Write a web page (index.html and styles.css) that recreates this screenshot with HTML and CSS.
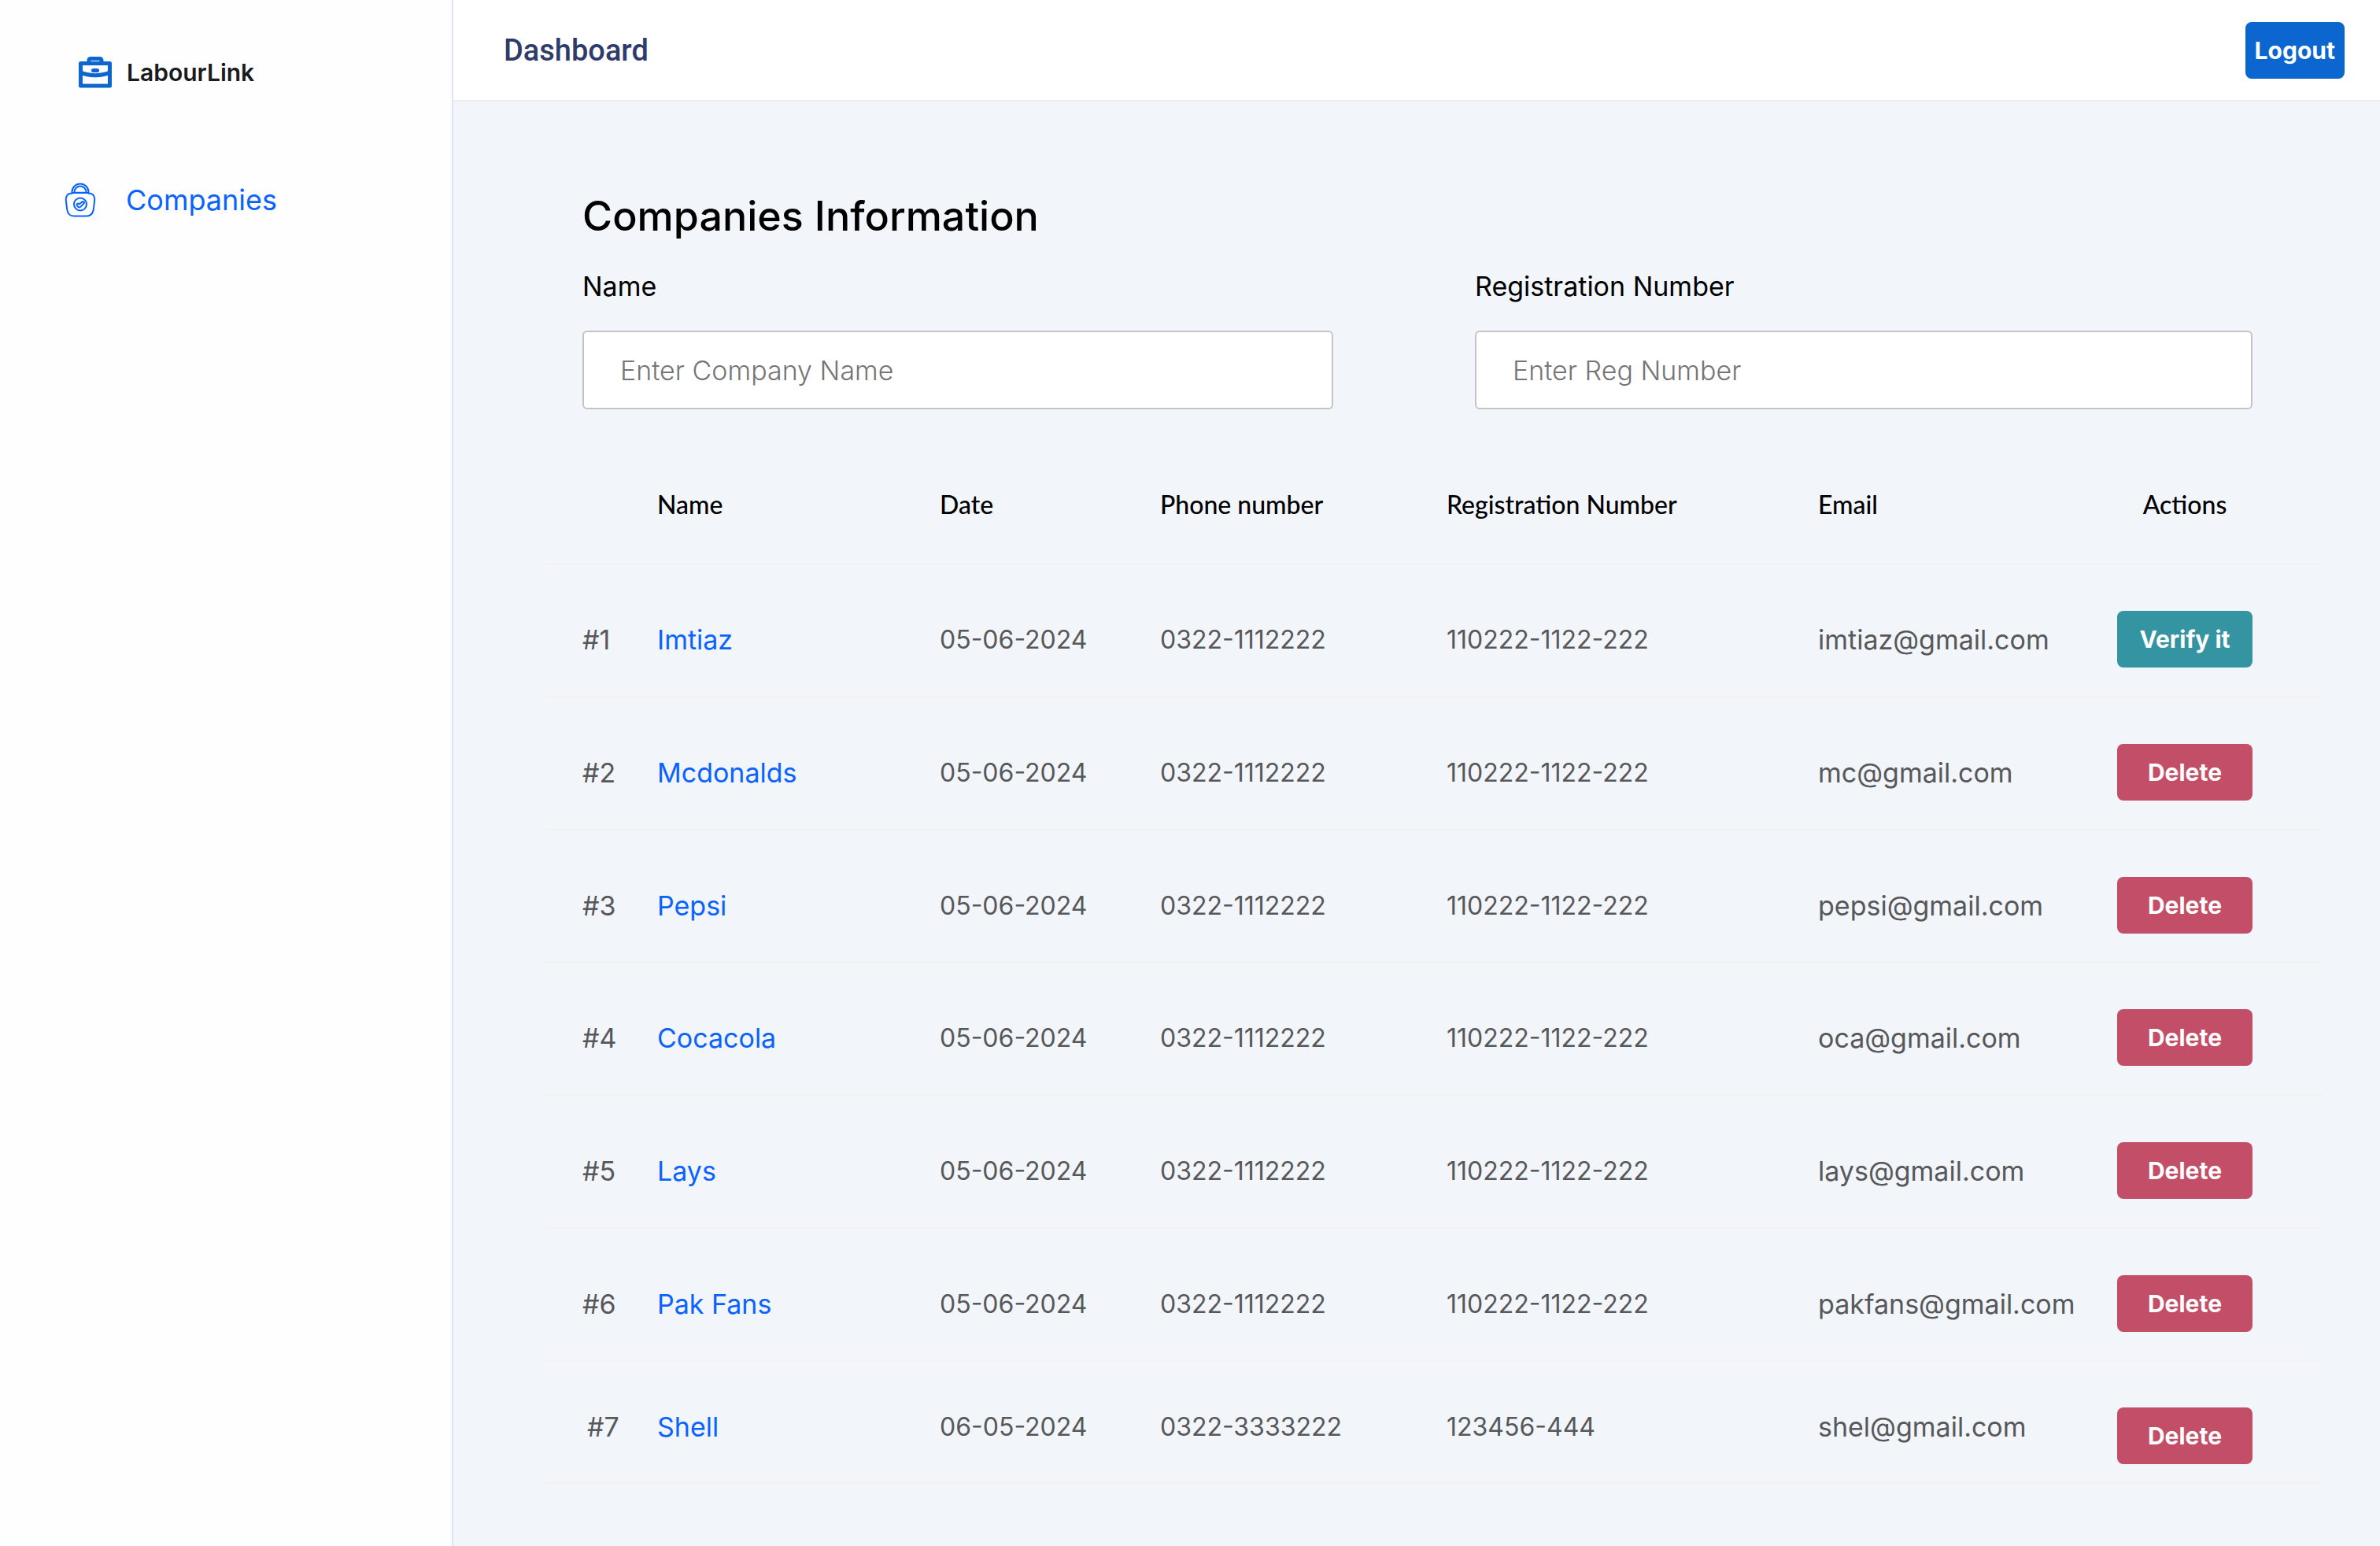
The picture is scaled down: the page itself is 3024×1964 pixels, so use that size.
FILE: index.html
```html
<!DOCTYPE html>
<html lang="en">
<head>
<meta charset="utf-8">
<title>LabourLink – Dashboard</title>
<meta name="viewport" content="width=device-width, initial-scale=1">
<link rel="stylesheet" href="styles.css">
</head>
<body>
<div class="app">
  <aside class="sidebar">
    <a class="brand" href="#">
      <svg class="brand-icon" viewBox="0 0 44 42" aria-hidden="true">
        <path fill="none" stroke="#0b66cf" stroke-width="5" stroke-linejoin="round" d="M3.500 9.500h37v28.500h-37zM14 9V5.500a2 2 0 0 1 2-2h12a2 2 0 0 1 2 2V9M3 20.500c9 5.500 29 5.500 38 0"/>
        <rect x="17" y="16" width="10" height="5" rx="2.500" fill="#0b66cf"/>
      </svg>
      <span>LabourLink</span>
    </a>
    <nav>
      <a class="nav-link" href="#">
        <svg class="nav-icon" viewBox="0 0 40 44" fill="none" stroke="#0a63ff" stroke-width="2" stroke-linecap="round" stroke-linejoin="round" aria-hidden="true">
          <path d="M9.500 13.500C4 13.500 1.500 17 1.800 22.500l1.400 11.500c.8 6 3.500 8.500 9 8.500h15.600c5.500 0 8.200-2.500 9-8.500l1.400-11.500c.3-5.500-2.200-9-7.700-9"/>
          <path d="M9.500 13.500V12a10.500 10.500 0 0 1 21 0v1.500M12.500 12.800V12a7.500 7.500 0 0 1 15 0v.8zM9.500 13h21"/>
          <circle cx="20" cy="27.500" r="8"/>
          <path d="M15.500 28c0-1.500 2-2 3-.5 1.500-1 3-3 5-3.500 1.500 0 2 1.500 1 2.500-1.500 1.500-3.500 4.500-5.500 5-1.500 0-3.500-2-3.500-3.500z"/>
        </svg>
        <span>Companies</span>
      </a>
    </nav>
  </aside>

  <div class="main">
    <header class="topbar">
      <h1 class="topbar-title">Dashboard</h1>
      <button class="btn btn-primary" type="button">Logout</button>
    </header>

    <main class="content">
      <h2 class="section-title">Companies Information</h2>
      <form class="filters">
        <div class="field">
          <label for="company-name">Name</label>
          <input id="company-name" type="text" placeholder="Enter Company Name">
        </div>
        <div class="field">
          <label for="reg-number">Registration Number</label>
          <input id="reg-number" type="text" placeholder="Enter Reg Number">
        </div>
      </form>

      <table class="companies">
        <colgroup>
          <col class="col-id"><col class="col-name"><col class="col-date"><col class="col-phone"><col class="col-reg"><col class="col-email"><col class="col-actions">
        </colgroup>
        <thead>
          <tr><th></th><th scope="col">Name</th><th scope="col">Date</th><th scope="col">Phone number</th><th scope="col">Registration Number</th><th scope="col">Email</th><th scope="col" class="actions">Actions</th></tr>
        </thead>
        <tbody>
          <tr><td>#1</td><td><a href="#">Imtiaz</a></td><td class="num">05-06-2024</td><td class="num">0322-1112222</td><td class="num">110222-1122-222</td><td>imtiaz@gmail.com</td><td class="actions"><button class="btn btn-verify" type="button">Verify it</button></td></tr>
          <tr><td>#2</td><td><a href="#">Mcdonalds</a></td><td class="num">05-06-2024</td><td class="num">0322-1112222</td><td class="num">110222-1122-222</td><td>mc@gmail.com</td><td class="actions"><button class="btn btn-delete" type="button">Delete</button></td></tr>
          <tr><td>#3</td><td><a href="#">Pepsi</a></td><td class="num">05-06-2024</td><td class="num">0322-1112222</td><td class="num">110222-1122-222</td><td>pepsi@gmail.com</td><td class="actions"><button class="btn btn-delete" type="button">Delete</button></td></tr>
          <tr><td>#4</td><td><a href="#">Cocacola</a></td><td class="num">05-06-2024</td><td class="num">0322-1112222</td><td class="num">110222-1122-222</td><td>oca@gmail.com</td><td class="actions"><button class="btn btn-delete" type="button">Delete</button></td></tr>
          <tr><td>#5</td><td><a href="#">Lays</a></td><td class="num">05-06-2024</td><td class="num">0322-1112222</td><td class="num">110222-1122-222</td><td>lays@gmail.com</td><td class="actions"><button class="btn btn-delete" type="button">Delete</button></td></tr>
          <tr><td>#6</td><td><a href="#">Pak Fans</a></td><td class="num">05-06-2024</td><td class="num">0322-1112222</td><td class="num">110222-1122-222</td><td>pakfans@gmail.com</td><td class="actions"><button class="btn btn-delete" type="button">Delete</button></td></tr>
          <tr class="row-new"><td>#7</td><td><a href="#">Shell</a></td><td class="num">06-05-2024</td><td class="num">0322-3333222</td><td class="num">123456-444</td><td>shel@gmail.com</td><td class="actions"><button class="btn btn-delete" type="button">Delete</button></td></tr>
        </tbody>
      </table>
    </main>
  </div>
</div>
</body>
</html>
```
FILE: styles.css
```css
* {
  box-sizing: border-box;
}

body {
  margin: 0;
  background: #f2f5fa;
  color: #000;
  font-family: Inter, "Noto Sans", sans-serif;
  font-size: 34px;
  line-height: 48px;
}

a {
  color: #0a63ff;
  text-decoration: none;
}

.app {
  display: flex;
  min-height: 100vh;
}

/* Sidebar */
.sidebar {
  flex: none;
  width: 576px;
  padding: 68px 80px;
  background: #fefefe;
  border-right: 2px solid #dbe4f8;
}

.brand {
  display: flex;
  align-items: center;
  gap: 18px;
  padding-left: 19px;
  color: #191b1f;
  font-size: 30px;
  font-weight: 600;
}

.brand-icon {
  width: 44px;
  height: 42px;
}

.nav-link {
  display: flex;
  align-items: center;
  gap: 38px;
  margin-top: 114px;
  padding-left: 2px;
  font-size: 36px;
}

.nav-icon {
  width: 40px;
  height: 44px;
}

/* Top bar */
.main {
  flex: 1;
  min-width: 0;
}

.topbar {
  display: flex;
  align-items: center;
  justify-content: space-between;
  padding: 28px 45px 27px 64px;
  background: #fff;
  border-bottom: 2px solid #ececec;
}

.topbar-title {
  margin: 0;
  color: #2f3b6b;
  font: 500 38px/48px Roboto, sans-serif;
}

/* Buttons */
.btn {
  height: 72px;
  padding: 0 12px;
  border: 0;
  border-radius: 8px;
  color: #fff;
  font: 700 30px/48px Inter, sans-serif;
}

.btn-primary {
  background: #0b66cf;
}

.btn-verify,
.btn-delete {
  width: 172px;
}

.btn-verify {
  background: #3494a2;
}

.btn-delete {
  background: #c34e68;
}

/* Content */
.content {
  padding: 110px 72px 76px 116px;
}

.section-title {
  margin: 0 48px;
  font-size: 52px;
  font-weight: 500;
  line-height: 72px;
}

.filters {
  display: grid;
  grid-template-columns: 954fr 988fr;
  gap: 180px;
  margin: 29px 90px 0 48px;
}

.field {
  display: flex;
  flex-direction: column;
  gap: 32px;
}

.field input {
  width: 100%;
  height: 100px;
  padding: 0 46px;
  background: #fff;
  border: 2px solid #c4c4c4;
  border-radius: 6px;
  font: 300 34px/48px Inter, sans-serif;
}

.field input::placeholder {
  color: #757575;
  opacity: 1;
}

/* Table */
.companies {
  width: 100%;
  margin-top: 72px;
  border-collapse: separate;
  border-spacing: 0;
  table-layout: fixed;
}

.companies th,
.companies td {
  padding: 72px 0 47px;
  border-bottom: 2px solid #f2f2f2;
  text-align: left;
  vertical-align: top;
  white-space: nowrap;
}

.companies th {
  padding: 25px 0 50px;
  font: 500 32px/48px Lato, sans-serif;
}

.companies td {
  color: #57585a;
}

.companies tr:nth-child(3n) td {
  padding-bottom: 46px;
}

.companies .num {
  font-size: 32px;
}

.companies td:first-child {
  padding-left: 48px;
}

.companies .actions {
  padding-right: 90px;
  text-align: right;
}

.companies th.actions {
  text-align: center;
}

.companies tr td.actions {
  padding-top: 59px;
  padding-bottom: 0;
  line-height: 0;
}

/* Shorter row for the latest entry */
.companies .row-new td:not(.actions) {
  padding-top: 60px;
  padding-bottom: 46px;
}

.companies .row-new td:first-child {
  padding-left: 54px;
}

.col-id { width: 143px; }
.col-name { width: 359px; }
.col-date { width: 280px; }
.col-phone { width: 364px; }
.col-reg { width: 472px; }
.col-email { width: 380px; }
.col-actions { width: 262px; }
```
